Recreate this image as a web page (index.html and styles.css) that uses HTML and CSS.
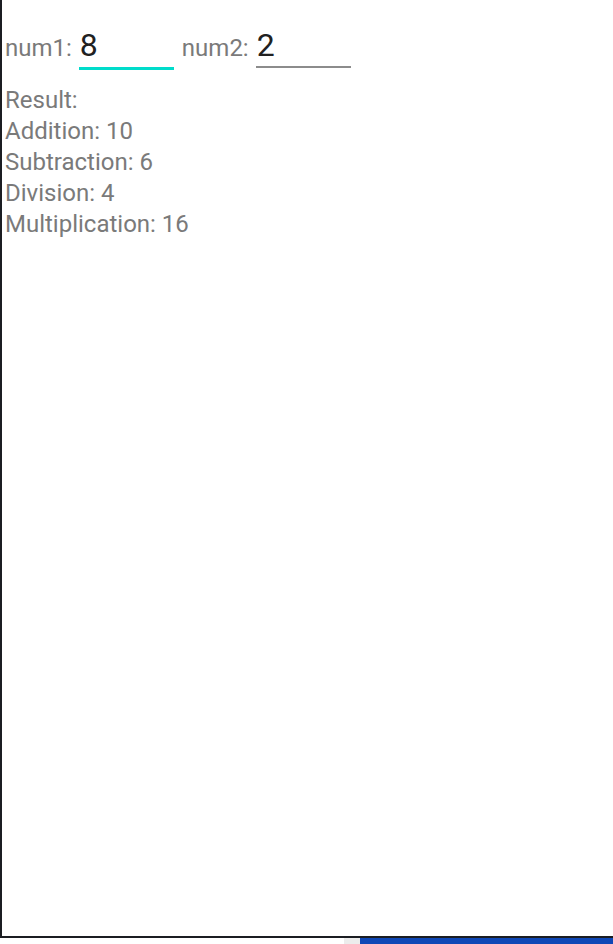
FILE: index.html
```html
<!DOCTYPE html>
<html>
<head>
<meta charset="utf-8">
<link rel="stylesheet" href="styles.css">
</head>
<body>
<div class="screen">
  <div class="row">
    <span class="label">num1:</span>
    <input class="num focused" type="text" value="8">
    <span class="label label2">num2:</span>
    <input class="num" type="text" value="2">
  </div>
  <div class="results">
    <div>Result:</div>
    <div>Addition: 10</div>
    <div>Subtraction: 6</div>
    <div>Division: 4</div>
    <div>Multiplication: 16</div>
  </div>
</div>
<div class="taskbar">
  <div class="tb-blank"></div>
  <div class="tb-gray"></div>
  <div class="tb-blue"></div>
</div>
</body>
</html>
```
FILE: styles.css
```css
html, body {
  margin: 0;
  padding: 0;
  background: #ffffff;
}
.screen {
  box-sizing: border-box;
  height: 938px;
  border-left: 2px solid #1b1d22;
  border-bottom: 2px solid #1b1d22;
  padding: 26px 0 0 3px;
  font-family: Roboto, "Liberation Sans", sans-serif;
  color: #7a7a7a;
}
.row {
  display: flex;
  align-items: baseline;
}
.label {
  font-size: 24px;
}
.label2 {
  margin-left: 8px;
}
.num {
  box-sizing: content-box;
  width: 94px;
  margin: 0 0 0 7px;
  padding: 0 0 2px 1px;
  border: none;
  border-bottom: 2px solid #8c8c8c;
  outline: none;
  background: transparent;
  font-family: Roboto, "Liberation Sans", sans-serif;
  font-size: 32px;
  color: #212121;
}
.num.focused {
  padding-bottom: 3px;
  border-bottom: 3px solid #00dccb;
}
.results {
  margin-top: 15px;
  font-size: 24px;
  line-height: 31px;
}
.taskbar {
  display: flex;
  height: 6px;
}
.tb-blank {
  width: 344px;
  background: #ffffff;
}
.tb-gray {
  width: 16px;
  background: #ececec;
}
.tb-blue {
  flex: 1;
  background: #0f47b6;
}
```
